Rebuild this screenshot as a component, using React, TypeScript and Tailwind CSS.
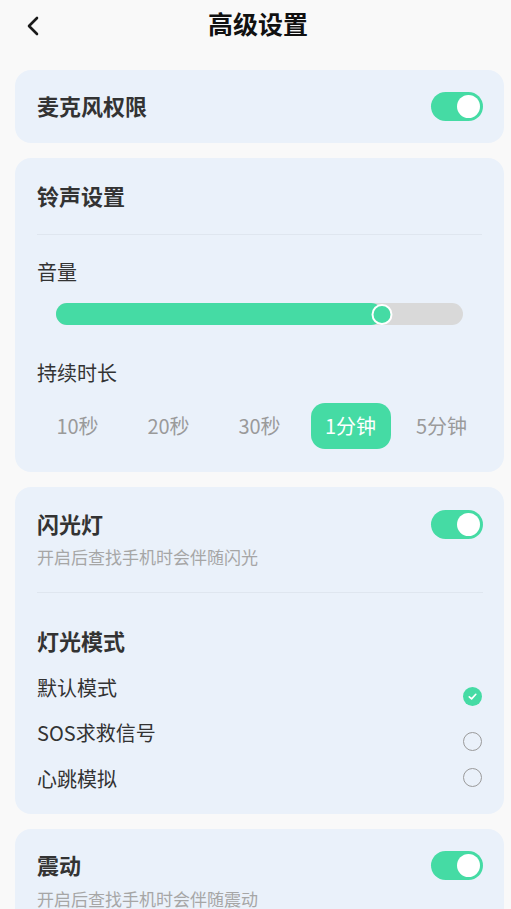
import React, { useState } from "react";

const font = { fontFamily: '"Noto Sans CJK SC", "Noto Sans", sans-serif' };

type ToggleProps = { on: boolean; onChange: () => void };

const Toggle = ({ on, onChange }: ToggleProps) => (
  <button
    onClick={onChange}
    className={`flex h-[29px] w-[52px] shrink-0 items-center rounded-full px-[3px] ${
      on ? "justify-end bg-[#45dba4]" : "justify-start bg-[#d6d6d6]"
    }`}
  >
    <span className="block h-[23px] w-[23px] rounded-full bg-white" />
  </button>
);

const durations = ["10秒", "20秒", "30秒", "1分钟", "5分钟"];

const modes = [
  { label: "默认模式", row: "mt-[19px]", offset: "mt-[13px]" },
  { label: "SOS求救信号", row: "mt-[17px]", offset: "mt-[13px]" },
  { label: "心跳模拟", row: "mt-[18px]", offset: "mt-[3px]" },
];

export default function App() {
  const [mic, setMic] = useState(true);
  const [flash, setFlash] = useState(true);
  const [vibrate, setVibrate] = useState(true);
  const [volume] = useState(80);
  const [duration, setDuration] = useState("1分钟");
  const [mode, setMode] = useState("默认模式");

  return (
    <div className="min-h-[909px] w-full bg-[#f9f9f9] text-[#333]" style={font}>
      {/* 顶部标题 */}
      <div className="relative flex h-[50px] items-center justify-center pb-[4px] pl-[5px]">
        <button className="absolute left-[26px] top-[16px]">
          <svg width="14" height="20" viewBox="0 0 14 20" fill="none">
            <path
              d="M11 2 L3 10 L11 18"
              stroke="#1a1a1a"
              strokeWidth="2.6"
              strokeLinecap="round"
              strokeLinejoin="round"
            />
          </svg>
        </button>
        <h1 className="text-[25px] font-bold leading-[34px] text-[#111]">高级设置</h1>
      </div>

      <div className="ml-[15px] mt-[20px] flex w-[489px] flex-col gap-[15px]">
        {/* 麦克风权限 */}
        <div className="flex h-[73px] items-center justify-between rounded-[16px] bg-[#eaf1fa] pl-[22px] pr-[21px]">
          <span className="pb-[4px] text-[22px] font-bold leading-[30px]">麦克风权限</span>
          <Toggle on={mic} onChange={() => setMic(!mic)} />
        </div>

        {/* 铃声设置 */}
        <div className="rounded-[16px] bg-[#eaf1fa] pb-[23px] pl-[22px] pr-[22px] pt-[22px]">
          <div className="text-[22px] font-bold leading-[30px]">铃声设置</div>
          <div className="mt-[24px] h-px bg-[#dfe6ef]" />
          <div className="mt-[23px] text-[20px] leading-[28px]">音量</div>
          <div className="relative mx-[19px] mt-[17px] h-[22px] rounded-full bg-[#d9d9d9]">
            <div
              className="h-full rounded-full bg-[#45dba4]"
              style={{ width: `${volume}%` }}
            />
            <div
              className="absolute top-[0.5px] h-[21px] w-[21px] -translate-x-1/2 rounded-full border-[2.5px] border-white bg-[#45dba4]"
              style={{ left: `${volume}%` }}
            />
          </div>
          <div className="mt-[34px] text-[20px] leading-[28px]">持续时长</div>
          <div className="-mx-[5px] mt-[16px] grid grid-cols-5">
            {durations.map((d) => (
              <div key={d} className="flex justify-center">
                <button
                  onClick={() => setDuration(d)}
                  className={`flex h-[46px] w-[80px] items-center justify-center rounded-[14px] text-[20px] ${
                    duration === d ? "bg-[#45dba4] text-white" : "text-[#9a9a9a]"
                  }`}
                >
                  {d}
                </button>
              </div>
            ))}
          </div>
        </div>

        {/* 闪光灯 */}
        <div className="rounded-[16px] bg-[#eaf1fa] pb-[21px] pl-[22px] pr-[21px] pt-[21px]">
          <div className="flex items-start justify-between">
            <span className="text-[22px] font-bold leading-[30px]">闪光灯</span>
            <div className="mt-[2px]">
              <Toggle on={flash} onChange={() => setFlash(!flash)} />
            </div>
          </div>
          <div className="mt-[6px] text-[17px] leading-[24px] text-[#a6a6a6]">
            开启后查找手机时会伴随闪光
          </div>
          <div className="mt-[23px] h-px bg-[#dfe6ef]" />
          <div className="mt-[32px] text-[22px] font-bold leading-[30px]">灯光模式</div>
          {modes.map((m) => (
            <div
              key={m.label}
              onClick={() => setMode(m.label)}
              className={`${m.row} flex h-[28px] items-start justify-between`}
            >
              <span className="text-[20px] leading-[28px]">{m.label}</span>
              {mode === m.label ? (
                <span
                  className={`${m.offset} mr-[1px] flex h-[19px] w-[19px] items-center justify-center rounded-full bg-[#45dba4]`}
                >
                  <svg width="11" height="11" viewBox="0 0 12 12" fill="none">
                    <path
                      d="M2.5 6.3 L5 8.6 L9.6 3.6"
                      stroke="white"
                      strokeWidth="1.8"
                      strokeLinecap="round"
                      strokeLinejoin="round"
                    />
                  </svg>
                </span>
              ) : (
                <span
                  className={`${m.offset} mr-[1px] block h-[19px] w-[19px] rounded-full border-[1.5px] border-[#9a9a9a]`}
                />
              )}
            </div>
          ))}
        </div>

        {/* 震动 */}
        <div className="rounded-[16px] bg-[#eaf1fa] pb-[40px] pl-[22px] pr-[21px] pt-[20px]">
          <div className="flex items-start justify-between">
            <span className="text-[22px] font-bold leading-[30px]">震动</span>
            <div className="mt-[2px]">
              <Toggle on={vibrate} onChange={() => setVibrate(!vibrate)} />
            </div>
          </div>
          <div className="mt-[7px] text-[17px] leading-[24px] text-[#a6a6a6]">
            开启后查找手机时会伴随震动
          </div>
        </div>
      </div>
    </div>
  );
}
